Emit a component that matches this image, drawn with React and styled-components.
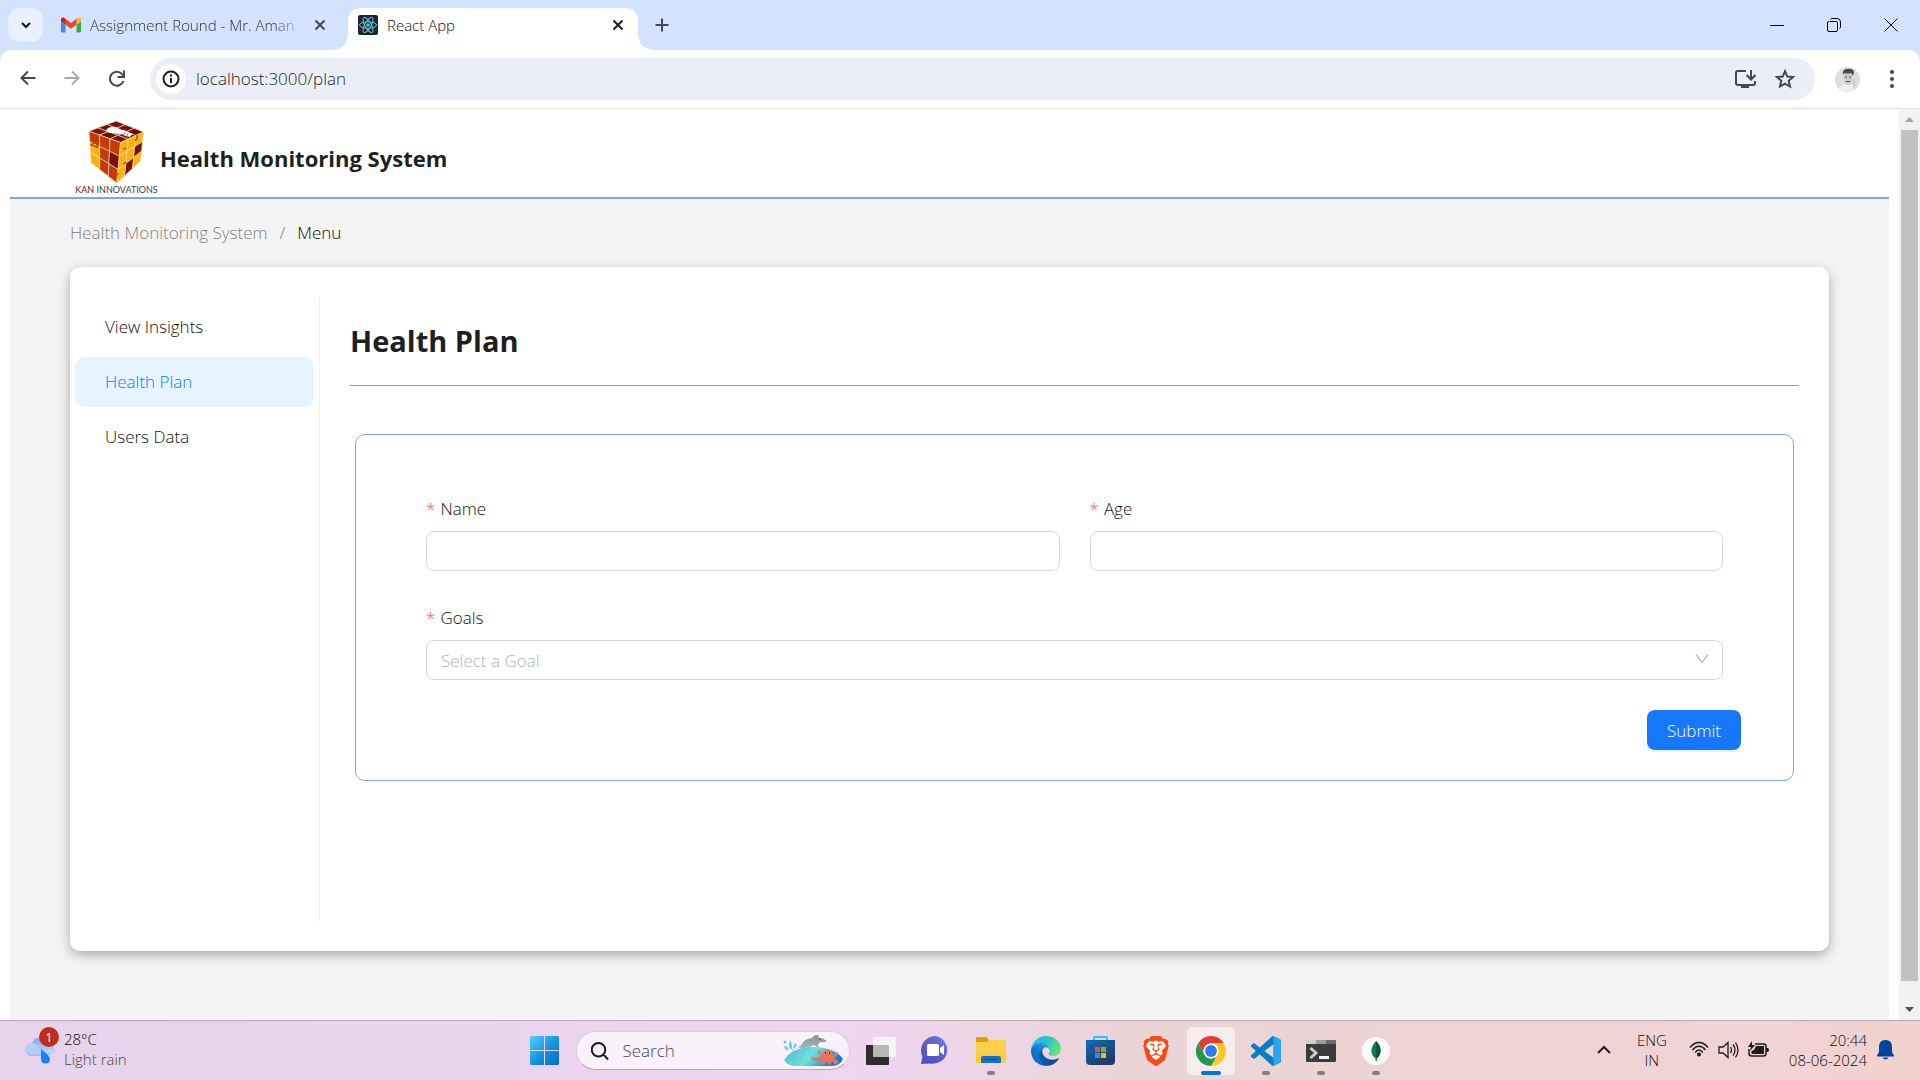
import React from "react";
import styled, { createGlobalStyle, css } from "styled-components";
import { SiBrave } from "react-icons/si";

const GlobalStyle = createGlobalStyle`
  *, *::before, *::after { box-sizing: border-box; }
  body {
    margin: 0;
    font-family: "Open Sans", "Noto Sans", sans-serif;
    font-weight: 350;
    color: #111;
    background: #fff;
  }
  button, input, select { font: inherit; color: inherit; }
  button { padding: 0; border: 0; background: none; cursor: pointer; }
  svg { display: block; flex: none; }
`;

const Screen = styled.div`
  display: flex;
  flex-direction: column;
  height: 100vh;
  overflow: hidden;
`;

/* ---------- browser chrome ---------- */

const TabStrip = styled.header`
  display: flex;
  align-items: center;
  height: 50px;
  flex: none;
  padding-left: 8px;
  background: #d3e2fd;
`;

const TabSearch = styled.button`
  display: grid;
  place-items: center;
  width: 35px;
  height: 34px;
  border-radius: 12px;
  background: #e9f1fe;
`;

const Tab = styled.div`
  position: relative;
  display: flex;
  align-items: center;
  align-self: flex-end;
  gap: 9px;
  height: 42px;
  padding: 0 10px 8px;
  font-size: 15px;
  line-height: 20px;
  width: ${(p) => (p.$active ? 290 : 305)}px;
  color: ${(p) => (p.$active ? "#111" : "#333")};
  ${(p) =>
    p.$active
      ? css`
          background: #fff;
          border-radius: 12px 12px 0 0;
          &::before,
          &::after {
            content: "";
            position: absolute;
            bottom: 0;
            width: 14px;
            height: 14px;
          }
          &::before {
            left: -14px;
            background: radial-gradient(circle at 0 0, transparent 13px, #fff 14px);
          }
          &::after {
            right: -14px;
            background: radial-gradient(circle at 100% 0, transparent 13px, #fff 14px);
          }
        `
      : css`
          padding-left: 18px;
          padding-right: 18px;
        `}
`;

const TabTitle = styled.span`
  flex: 1;
  overflow: hidden;
  white-space: nowrap;
  ${(p) =>
    p.$fade &&
    css`
      mask-image: linear-gradient(to right, #000 88%, transparent);
    `}
`;

const IconButton = styled.button`
  display: grid;
  place-items: center;
  width: ${(p) => p.$size || 20}px;
  height: ${(p) => p.$size || 20}px;
  flex: none;
  color: ${(p) => p.$color || "#474747"};
`;

const NewTab = styled(IconButton)`
  margin-left: 10px;
`;

const WindowButtons = styled.div`
  display: flex;
  margin-left: auto;
  padding-right: 1px;
`;

const WindowButton = styled.button`
  display: grid;
  place-items: center;
  width: 57px;
  height: 48px;
`;

const Toolbar = styled.div`
  display: flex;
  align-items: center;
  flex: none;
  height: 59px;
  padding: 0 12px 0 8px;
  border-bottom: 1px solid #dfe0e2;
  background: #fff;
  position: relative;
  &::before,
  &::after {
    content: "";
    position: absolute;
    top: 0;
    width: 10px;
    height: 10px;
  }
  &::before {
    left: 0;
    background: radial-gradient(circle at 100% 100%, transparent 9px, #d3e2fd 10px);
  }
  &::after {
    right: 0;
    background: radial-gradient(circle at 0 100%, transparent 9px, #d3e2fd 10px);
  }
`;

const NavButtons = styled.div`
  display: flex;
  gap: 4px;
  margin-right: 12px;
`;

const Omnibox = styled.div`
  display: flex;
  align-items: center;
  flex: 1;
  height: 42px;
  padding: 0 10px 0 6px;
  border-radius: 21px;
  background: #ebeef7;
`;

const SiteInfo = styled.button`
  display: grid;
  place-items: center;
  width: 30px;
  height: 30px;
  border-radius: 15px;
  background: #fff;
`;

const Address = styled.input`
  flex: 1;
  min-width: 0;
  margin-left: 10px;
  padding: 0;
  border: 0;
  outline: 0;
  background: none;
  font-size: 17px;
  line-height: 24px;
  color: #1f1f1f;
`;

const Avatar = styled(IconButton)`
  margin: 0 16px 0 19px;
`;

/* ---------- page ---------- */

const Viewport = styled.div`
  display: flex;
  flex: 1;
  min-height: 0;
  overflow: hidden;
`;

const Page = styled.div`
  flex: 1;
  margin: 0 10px;
  display: flex;
  flex-direction: column;
`;

const SiteHeader = styled.header`
  display: flex;
  align-items: center;
  flex: none;
  height: 90px;
  padding: 0 66px;
  gap: 3px;
  border-bottom: 2px solid #75a6fa;
  background: #fff;
`;

const Logo = styled.div`
  display: flex;
  flex-direction: column;
  align-items: center;
  width: 81px;
  padding-top: 9px;
  font-family: Lato, sans-serif;
  font-size: 9px;
  font-weight: 400;
  line-height: 12px;
  white-space: nowrap;
  color: #3d3d3d;
  b {
    font-weight: 400;
    color: #6c1410;
  }
`;

const SiteTitle = styled.h1`
  margin: 0;
  padding-top: 10px;
  font-size: 22px;
  line-height: 32px;
  font-weight: 700;
  color: #1f1f1f;
`;

const Body = styled.main`
  flex: 1;
  padding: 20px 60px 60px;
  background: #f4f4f4;
`;

const Breadcrumb = styled.nav`
  display: flex;
  gap: 12px;
  margin-bottom: 20px;
  font-size: 17px;
  line-height: 28px;
  color: #808080;
  a {
    color: inherit;
    text-decoration: none;
  }
  span:last-child {
    color: #111;
  }
`;

const Card = styled.section`
  display: flex;
  padding: 30px 0;
  border-radius: 10px;
  background: #fff;
  box-shadow: 0 4px 12px rgba(40, 40, 60, 0.36);
`;

const Sider = styled.nav`
  flex: none;
  width: 250px;
  min-height: 624px;
  padding: 5px;
  display: flex;
  flex-direction: column;
  gap: 5px;
  border-right: 1px solid #f0f0f0;
`;

const MenuItem = styled.a`
  padding: 0 30px;
  border-radius: 10px;
  font-size: 17px;
  line-height: 50px;
  text-decoration: none;
  color: ${(p) => (p.$active ? "#1677ff" : "#111")};
  background: ${(p) => (p.$active ? "#e6f4ff" : "transparent")};
`;

const Content = styled.div`
  flex: 1;
  padding: 20px 30px 0;
`;

const Heading = styled.h2`
  margin: 0;
  padding-bottom: 20px;
  border-bottom: 1px solid #9a9a9a;
  font-size: 29px;
  line-height: 48px;
  font-weight: 700;
  color: #1f1f1f;
`;

const PlanForm = styled.form`
  margin: 48px 5px 0;
  padding: 60px 52px 30px;
  border: 1px solid #75a6fa;
  border-radius: 10px;
`;

const Fields = styled.div`
  display: grid;
  grid-template-columns: 1fr 1fr;
  gap: 33px 30px;
  padding: 0 18px;
`;

const Field = styled.div`
  display: flex;
  flex-direction: column;
  gap: 8px;
  ${(p) =>
    p.$wide &&
    css`
      grid-column: 1 / -1;
    `}
`;

const Label = styled.label`
  font-size: 17px;
  line-height: 28px;
  &::before {
    content: "*";
    margin-right: 5px;
    color: #ff4d4f;
  }
`;

const control = css`
  width: 100%;
  height: 40px;
  padding: 0 14px;
  border: 1px solid #d9d9d9;
  border-radius: 8px;
  outline: 0;
  background: #fff;
  font-size: 17px;
`;

const TextBox = styled.input`
  ${control}
`;

const SelectWrap = styled.div`
  position: relative;
  svg {
    position: absolute;
    right: 14px;
    top: 13px;
    pointer-events: none;
  }
`;

const Select = styled.select`
  ${control}
  appearance: none;
  color: #b4b4b4;
`;

const Actions = styled.div`
  display: flex;
  justify-content: flex-end;
  margin-top: 30px;
`;

const Submit = styled.button`
  height: 40px;
  padding: 0 20px;
  border-radius: 8px;
  background: #1677ff;
  box-shadow: 0 2px 0 rgba(5, 145, 255, 0.1);
  font-size: 17px;
  color: #fff;
`;

const ScrollTrack = styled.div`
  display: flex;
  flex-direction: column;
  align-items: center;
  flex: none;
  width: 21px;
  background: #f1f1f1;
`;

const ScrollArrow = styled.span`
  display: grid;
  place-items: center;
  height: 21px;
`;

const ScrollRail = styled.div`
  flex: 1;
  width: 17px;
  padding-bottom: 18px;
  display: flex;
`;

const ScrollThumb = styled.div`
  flex: 1;
  background: #c1c1c1;
`;

/* ---------- taskbar ---------- */

const Taskbar = styled.footer`
  display: grid;
  grid-template-columns: 1fr auto 1fr;
  align-items: center;
  flex: none;
  height: 60px;
  border-top: 1px solid #b5a9b4;
  background: linear-gradient(90deg, #e8d3ec 0%, #ead3ed 25%, #efd5f0 44%, #ebd4d9 58%, #ecd4d5 70%, #f1d4d5 90%, #f0d3ce 100%);
`;

const Weather = styled.button`
  position: relative;
  display: flex;
  align-items: center;
  gap: 9px;
  padding: 0 0 3px 25px;
  text-align: left;
  font-size: 15px;
  line-height: 20px;
  color: #0c0c0c;
  small {
    display: block;
    font-size: 15px;
    color: #4a434b;
  }
`;

const Badge = styled.span`
  position: absolute;
  left: 39px;
  top: -2px;
  width: 20px;
  height: 20px;
  border-radius: 10px;
  background: #c42b1c;
  text-align: center;
  font-size: 13px;
  font-weight: 400;
  line-height: 20px;
  color: #fff;
`;

const Dock = styled.div`
  display: flex;
  align-items: center;
  gap: 7px;
`;

const DockApp = styled.button`
  position: relative;
  display: grid;
  place-items: center;
  width: 48px;
  height: 48px;
  border-radius: 5px;
  background: ${(p) => (p.$state === "active" ? "rgba(255,255,255,.55)" : "transparent")};
  &::after {
    content: "";
    display: ${(p) => (p.$state ? "block" : "none")};
    position: absolute;
    bottom: 0;
    left: 50%;
    transform: translateX(-50%);
    height: 4px;
    border-radius: 2px;
    width: ${(p) => (p.$state === "active" ? 20 : 8)}px;
    background: ${(p) => (p.$state === "active" ? "#0078d4" : "#8a7b80")};
  }
`;

const SearchBox = styled.label`
  display: flex;
  align-items: center;
  gap: 14px;
  width: 274px;
  height: 39px;
  padding: 0 6px 0 14px;
  border: 1px solid #e0cbe0;
  border-bottom-color: #b9a6ba;
  border-radius: 20px;
  background: #f9f2fa;
  input {
    flex: 1;
    min-width: 0;
    padding: 0;
    border: 0;
    outline: 0;
    background: none;
    font-size: 17px;
    line-height: 24px;
  }
  input::placeholder {
    color: #4c464d;
    opacity: 1;
  }
`;

const Tray = styled.div`
  display: flex;
  justify-content: flex-end;
  align-items: center;
  padding: 0 26px 2px 0;
  color: #1c1c1c;
`;

const TrayText = styled.button`
  font-size: 15px;
  line-height: 20px;
  color: #0c0c0c;
  text-align: ${(p) => p.$align};
  margin-right: ${(p) => (p.$align === "right" ? 10 : 22)}px;
`;

const TrayIcons = styled.div`
  display: flex;
  gap: 9px;
  margin-right: 20px;
`;

const TrayChevron = styled.button`
  margin-right: 26px;
`;

/* ---------- drawings ---------- */

const Stroke = ({ size = 20, w = 2, d, color = "currentColor", box = 20, cap = "butt" }) => (
  <svg width={size} height={size} viewBox={`0 0 ${box} ${box}`} fill="none" stroke={color} strokeWidth={w} strokeLinecap={cap}>
    <path d={d} />
  </svg>
);

const Close = () => <Stroke size={20} w={2} d="M5.5 5.5 14.5 14.5M14.5 5.5 5.5 14.5" />;

const Gmail = () => (
  <svg width="20" height="20" viewBox="52 42 88 66">
    <path fill="#4285f4" d="M58 108h14V74L52 59v43c0 3.320 2.690 6 6 6" />
    <path fill="#34a853" d="M120 108h14c3.320 0 6-2.690 6-6V59l-20 15" />
    <path fill="#fbbc04" d="M120 48v26l20-15v-8c0-7.420-8.470-11.650-14.400-7.200" />
    <path fill="#ea4335" d="M72 74V48l24 18 24-18v26L96 92" />
    <path fill="#c5221f" d="M52 51v8l20 15V48l-5.600-4.200c-5.940-4.450-14.400-.22-14.400 7.200" />
  </svg>
);

const ReactMark = () => (
  <svg width="20" height="20" viewBox="0 0 20 20">
    <rect width="20" height="20" rx="2" fill="#20232a" />
    <g fill="none" stroke="#5fc9e3" strokeWidth="1">
      <ellipse cx="10" cy="10" rx="8.500" ry="3.200" />
      <ellipse cx="10" cy="10" rx="8.500" ry="3.200" transform="rotate(60 10 10)" />
      <ellipse cx="10" cy="10" rx="8.500" ry="3.200" transform="rotate(120 10 10)" />
    </g>
    <circle cx="10" cy="10" r="1.700" fill="#5fc9e3" />
  </svg>
);

const mix = (a, b, t) => [a[0] + (b[0] - a[0]) * t, a[1] + (b[1] - a[1]) * t];
const R = "#c33a08";
const Y = "#f9b30b";
const D = "#7a120b";
const faces = [
  { corners: [[84, 65], [163, 35], [243, 67], [176, 98]], colors: [D, "#6b0f08", D, "#6b0f08", D, D, D, D, "#6b0f08"] },
  { corners: [[84, 65], [176, 98], [165, 216], [90, 157]], colors: [R, R, R, Y, R, D, Y, R, R] },
  { corners: [[176, 98], [243, 67], [234, 152], [165, 216]], colors: [Y, Y, Y, Y, Y, D, Y, D, Y] },
];

const Cube = () => (
  <svg width="58" height="64" viewBox="84 32 163 187">
    {faces.map(({ corners: [a, b, c, d], colors }, f) =>
      colors.map((fill, i) => {
        const u = (i % 3) / 3;
        const v = Math.floor(i / 3) / 3;
        const at = (s, t) => mix(mix(a, b, s), mix(d, c, s), t).join(",");
        const e = 1 / 3;
        return (
          <polygon
            key={`${f}-${i}`}
            points={[at(u, v), at(u + e, v), at(u + e, v + e), at(u, v + e)].join(" ")}
            fill={fill}
            stroke="#f0d8b8"
            strokeWidth="2"
          />
        );
      })
    )}
    <path d="M135 66q-3-10 10-13 14-4 24 3 6 6 18 6l10 5 14 5-8 10-15-4-10-6q-10 2-20-1-16-1-23-5z" fill="#fff" />
    <path d="M190 68l-6 10M198 71l-6 10" stroke="#7a120b" strokeWidth="2" />
    <path d="M90 104q8-10 18 0v8l-18-8zM150 190q10 10 20-2M122 128l8 4M122 158l8 6M184 118l8-4M184 160l8-5M218 92l6-6v-10" fill="none" stroke="#b8410a" strokeWidth="4" />
  </svg>
);

const InstallIcon = () => (
  <svg width="22" height="20" viewBox="0 0 22 20" fill="none" stroke="#474747" strokeWidth="2">
    <path d="M12 2H4Q2 2 2 4v10q0 2 2 2h15q2 0 2-2v-2" />
    <path d="M17 1v9M12.500 6 17 10.500 21.500 6" />
    <path d="M7 17.500h8" strokeWidth="3" />
  </svg>
);

const StarIcon = () => (
  <svg width="22" height="22" viewBox="0 0 24 24" fill="none" stroke="#474747" strokeWidth="2.200">
    <path d="M12 3.500 14.500 9.300 20.800 9.900 16 14 17.500 20.200 12 17 6.500 20.200 8 14 3.200 9.900 9.500 9.300Z" />
  </svg>
);

const Portrait = () => (
  <svg width="25" height="25" viewBox="0 0 25 25">
    <circle cx="12.500" cy="12.500" r="12.500" fill="#dedede" />
    <path d="M4 23q2-6 8-6.500 7 .5 9 6-8 4-17 .5z" fill="#efefef" />
    <path d="M9 6h8v7q-1 5-4 5t-4-5z" fill="#c9c9c9" />
    <path d="M8 8q-1-5 3-6 7-1 8 3l-1 4q-1-3-3-3-4 1-6 0z" fill="#4a4a4a" />
    <path d="M10 10h2M14 10h2M11 14.500h4" stroke="#555" strokeWidth="1.200" />
    <path d="M19 12v10" stroke="#b5b5b5" />
  </svg>
);

const RainIcon = () => (
  <svg width="30" height="29" viewBox="0 0 30 29">
    <defs>
      <linearGradient id="cloud" x1="0" y1="0" x2="0" y2="1">
        <stop offset="0" stopColor="#7fa6e8" />
        <stop offset="1" stopColor="#c9dcf8" />
      </linearGradient>
      <linearGradient id="drop" x1="0" y1="0" x2="0" y2="1">
        <stop offset="0" stopColor="#2f7df0" />
        <stop offset="1" stopColor="#0a84ff" />
      </linearGradient>
    </defs>
    <path d="M6 10Q9 1 17 3q7 1 8 7 5 1 5 5 0 5-5 5H10z" fill="url(#cloud)" />
    <path d="M6 20q-6 0-6-6 0-5 6-6 6 0 8 5l4 7z" fill="#b4cff5" />
    <path d="M2 18q8 3 24 0-1 3-5 3H6q-3 0-4-3z" fill="#9dbdf0" />
    <path d="M16 14v10q0 4.500 4.500 4.500T25 24q0-3-9-10z" fill="url(#drop)" />
  </svg>
);

const StartIcon = () => (
  <svg width="29" height="29" viewBox="0 0 29 29">
    <defs>
      <linearGradient id="start" gradientUnits="userSpaceOnUse" x1="0" y1="0" x2="29" y2="29">
        <stop offset="0" stopColor="#4fd0fb" />
        <stop offset="0.500" stopColor="#1798e0" />
        <stop offset="1" stopColor="#0069c8" />
      </linearGradient>
    </defs>
    <path d="M1 0H14V14H0V1zM15 0H28L29 1V14H15zM0 15H14V29H1L0 28zM15 15H29V28L28 29H15z" fill="url(#start)" />
  </svg>
);

const Dolphin = () => (
  <svg width="60" height="31" viewBox="0 0 60 31">
    <defs>
      <linearGradient id="sea" x1="0" y1="0" x2="1" y2="0.300">
        <stop offset="0" stopColor="#4fb8cc" />
        <stop offset="0.550" stopColor="#6fe0dd" />
        <stop offset="1" stopColor="#0f7ce8" />
      </linearGradient>
      <linearGradient id="skin" x1="0" y1="0" x2="0" y2="1">
        <stop offset="0" stopColor="#7f979b" />
        <stop offset="1" stopColor="#a9bcc0" />
      </linearGradient>
    </defs>
    <path d="M1 25Q9 13 26 12q25-1 34 12-3 7-11 7H14Q4 31 1 25z" fill="url(#sea)" />
    <path d="M5 16Q1 14 1 11l4 1zM7 14Q5 9 7 5q3 5 2 9zM10 13l2-5 2 2-3 4z" fill="#6cc9ee" />
    <circle cx="2" cy="7" r="1.500" fill="#6cc9ee" />
    <path d="M9 15q6-1 9-5 3-6 11-7 1-3 6-3l1 3q5 0 6 2l2 1q-2 2-7 1-1 2-2 2l1 4-5-3q-5 3-11 3-5-1-8 1l-2 2q-1-1-3-1z" fill="url(#skin)" />
    <circle cx="37" cy="4" r=".8" fill="#333" />
    <path d="M40 19q0-4 5-4t4 5q4-1 5-4 2 4-3 7l5 4-4 3-3-4-2 5-3-5-4 4-3-1 3-4-6 1-5-1-1-4 4 2 8-2-6-4 2-2z" fill="#ef7350" />
    <path d="M42 18h1M46 18h1" stroke="#4a1d18" strokeWidth="1.500" />
  </svg>
);

const TaskView = () => (
  <svg width="30" height="28" viewBox="0 0 30 28">
    <rect y="8" width="23" height="20" rx="1" fill="#2d2d2d" />
    <rect x="7" width="23" height="20" rx="1" fill="#f5f3f5" />
    <path d="M7 8h16v12H8l-1-1z" fill="#b9b6b8" />
  </svg>
);

const Meet = () => (
  <svg width="29" height="29" viewBox="0 0 29 29">
    <defs>
      <linearGradient id="meet" x1="1" y1="0" x2="0.200" y2="1">
        <stop offset="0" stopColor="#5c8df0" />
        <stop offset="0.400" stopColor="#6a62c4" />
        <stop offset="1" stopColor="#4d50c4" />
      </linearGradient>
    </defs>
    <path d="M14.500 0A14.500 14 0 1 1 9 27.500L0 28 1.500 21A14.500 14.500 0 0 1 14.500 0z" fill="url(#meet)" />
    <rect x="6" y="8" width="12" height="12" rx="1.500" fill="#fff" />
    <path d="M19 12l4-3v10l-4-3z" fill="#fff" />
  </svg>
);

const Folder = () => (
  <svg width="30" height="27" viewBox="0 0 30 27">
    <path d="M0 1q0-1 1-1h9l3 3v5H0z" fill="#e2a003" />
    <path d="M0 5h11l2-2h16q1 0 1 1v22H0z" fill="#ffd04a" />
    <path d="M0 14h30v12H0z" fill="#fbc52e" opacity=".5" />
    <path d="M5 26v-5q0-2 2-2h16q2 0 2 2v5z" fill="#1173c8" />
    <path d="M9 22.500h12" stroke="#0a4c8c" strokeWidth="1.200" />
  </svg>
);

const Edge = () => (
  <svg width="30" height="30" viewBox="0 0 256 256">
    <defs>
      <linearGradient id="e1" x1="0.250" y1="0.700" x2="1" y2="0.700">
        <stop offset="0" stopColor="#0c59a4" />
        <stop offset="1" stopColor="#114a8b" />
      </linearGradient>
      <linearGradient id="e2" x1="0.800" y1="0.200" x2="0.200" y2="0.900">
        <stop offset="0" stopColor="#1b9de2" />
        <stop offset="0.500" stopColor="#0f7cd0" />
        <stop offset="1" stopColor="#0a66c0" />
      </linearGradient>
      <linearGradient id="e3" x1="0" y1="0.300" x2="1" y2="0.600">
        <stop offset="0" stopColor="#2bb8ee" />
        <stop offset="0.500" stopColor="#2ec3c9" />
        <stop offset="1" stopColor="#66eb6e" />
      </linearGradient>
    </defs>
    <g transform="translate(-4.630 -4.920)">
      <path fill="url(#e1)" d="M235.680 195.460a93.730 93.730 0 0 1-10.540 4.710 101.870 101.870 0 0 1-35.900 6.460c-47.320 0-88.540-32.550-88.540-74.320A31.480 31.480 0 0 1 117.130 105c-42.800 1.800-53.800 46.400-53.800 72.530 0 73.880 68.090 81.370 82.760 81.370 7.910 0 19.840-2.300 27-4.560l1.310-.44a128.340 128.340 0 0 0 66.600-52.800 4 4 0 0 0-5.320-5.640z" />
      <path fill="url(#e2)" d="M110.340 246.340A79.200 79.200 0 0 1 87.600 225a80.720 80.720 0 0 1 29.530-120c3.120-1.470 8.450-4.130 15.540-4a32.350 32.350 0 0 1 25.690 13 31.880 31.880 0 0 1 6.360 18.660c0-.21 24.460-79.600-80-79.600-43.900 0-80 41.660-80 78.210a130.150 130.150 0 0 0 12.110 56 128 128 0 0 0 156.380 67.110 75.550 75.550 0 0 1-62.780-8z" />
      <path fill="url(#e3)" d="M156.940 153.780c-.81 1.050-3.300 2.500-3.300 5.660 0 2.610 1.700 5.120 4.720 7.230 14.380 10 41.490 8.680 41.560 8.680a59.560 59.560 0 0 0 30.270-8.350 61.380 61.380 0 0 0 30.430-52.880c.26-22.410-8-37.310-11.340-43.910C228.090 28.760 182.350 4.920 132.610 4.920a128 128 0 0 0-128 126.200c.48-36.540 36.800-66.050 80-66.050 3.500 0 23.460.34 42 10.070 16.340 8.580 24.900 18.940 30.850 29.210 6.180 10.670 7.280 24.150 7.280 29.520s-2.740 13.330-7.800 19.910z" />
    </g>
  </svg>
);

const Store = () => (
  <svg width="29" height="29" viewBox="0 0 29 29">
    <defs>
      <linearGradient id="bag" x1="0" y1="0" x2="0.600" y2="1">
        <stop offset="0" stopColor="#0d6cbd" />
        <stop offset="1" stopColor="#213a66" />
      </linearGradient>
    </defs>
    <path d="M8 5V2q0-1 1-1h11q1 0 1 1v3" fill="none" stroke="#2fc0f5" strokeWidth="2" />
    <path d="M0 4h29v21q0 4-4 4H4q-4 0-4-4z" fill="url(#bag)" />
    <path d="M9 11h5v5H9z" fill="#f25022" />
    <path d="M15 11h5v5h-5z" fill="#7fba00" />
    <path d="M9 17h5v5H9z" fill="#00a4ef" />
    <path d="M15 17h5v5h-5z" fill="#ffb900" />
  </svg>
);

const Brave = () => (
  <svg width="30" height="30" viewBox="0 0 24 24">
    <path d="M5 5h14l1 6-3 8-5 3-5-3-3-8z" fill="#fff" />
    <SiBrave width="24" height="24" color="#fb4a12" size="24" />
  </svg>
);

const Chrome = () => (
  <svg width="30" height="30" viewBox="0 0 48 48">
    <circle cx="24" cy="24" r="24" fill="#fff" />
    <path d="M3.215 12A24 24 0 0 1 44.785 12H24A12 12 0 0 0 13.600 30z" fill="#dc4132" />
    <path d="M44.785 12A24 24 0 0 1 24 48L34.400 30A12 12 0 0 0 24 12z" fill="#fcc624" />
    <path d="M24 48A24 24 0 0 1 3.215 12L13.600 30A12 12 0 0 0 34.400 30z" fill="#259846" />
    <circle cx="24" cy="24" r="12" fill="#fff" />
    <circle cx="24" cy="24" r="9.500" fill="#2f7bee" />
  </svg>
);

const Code = () => (
  <svg width="30" height="30" viewBox="0 0 24 24">
    <path fill="#0a7cc8" d="M23.150 2.587L18.210.21a1.494 1.494 0 0 0-1.705.29l-9.460 8.630-4.120-3.128a.999.999 0 0 0-1.276.057L.327 7.261A1 1 0 0 0 .326 8.740L3.899 12 .326 15.260a1 1 0 0 0 .001 1.479L1.650 17.940a.999.999 0 0 0 1.276.057l4.120-3.128 9.460 8.630a1.492 1.492 0 0 0 1.704.29l4.942-2.377A1.500 1.500 0 0 0 24 20.060V3.939a1.500 1.500 0 0 0-.85-1.352zm-5.146 14.861L10.826 12l7.178-5.448v10.896z" />
    <path fill="#2aa5f0" d="M18.210.21l4.940 2.377a1.500 1.500 0 0 1 .85 1.352V20.060a1.500 1.500 0 0 1-.85 1.350l-4.940 2.380q-.9.200-1.200-.2 1 0 1-1.200V1.600q0-1.200-1-1.200.6-.4 1.200-.2z" />
  </svg>
);

const Terminal = () => (
  <svg width="30" height="22" viewBox="0 0 30 22">
    <rect width="30" height="22" rx="1.500" fill="#3b3b3b" />
    <path d="M0 4V1q0-1 1-1h9v4z" fill="#cfcfcf" />
    <path d="M10 0h10v4H10z" fill="#9b9b9b" />
    <path d="M20 0h9q1 0 1 1v3H20z" fill="#6a6a6a" />
    <path d="M4.500 8 10 13 4.500 18" fill="none" stroke="#ccc" strokeWidth="3" />
    <path d="M13 17.500h10" stroke="#f5f5f5" strokeWidth="3" />
  </svg>
);

const Mongo = () => (
  <svg width="28" height="28" viewBox="0 0 28 28">
    <circle cx="14" cy="14" r="14" fill="#f9fafa" />
    <path d="M14 4q5 5 4.500 10.500Q18 19 14.500 21.500V24h-1v-2.500Q9.500 19 9.500 14 9.500 9 14 4z" fill="#0f7a51" />
    <path d="M14 4q5 5 4.500 10.500Q18 19 14.500 21.500V24H14z" fill="#07593c" />
  </svg>
);

const Wifi = () => (
  <svg width="20" height="16" viewBox="0 0 20 16" fill="none" stroke="#1c1c1c" strokeWidth="1.400">
    <path d="M1 6.500Q5 1.500 10 1.500T19 6.500M3.500 9Q6.500 5.300 10 5.300T16.500 9M6.200 11.500Q8 9 10 9t3.800 2.500" />
    <circle cx="10" cy="13.500" r="1.300" fill="#1c1c1c" />
  </svg>
);

const Volume = () => (
  <svg width="21" height="18" viewBox="0 0 21 18" fill="none" stroke="#1c1c1c" strokeWidth="1.300">
    <path d="M1 6h4l5-4.500v15L5 12H1zM12.500 6q2 3 0 6M15 3.500q4 5.500 0 11M17.500 1.500q5 7.500 0 15" />
  </svg>
);

const Battery = () => (
  <svg width="21" height="16" viewBox="0 0 21 16">
    <path d="M7 3h8.500q2.500 0 2.500 2.500v7q0 2.500-2.500 2.500h-12Q1 15 1 12.500V8" fill="none" stroke="#1c1c1c" strokeWidth="1.500" />
    <path d="M8 5h8v8H3.500V10L6 9z" fill="#1c1c1c" />
    <path d="M18 7h1.500q1.500 0 1.500 2t-1.500 2H18z" fill="#1c1c1c" />
    <path d="M4 0 0 6h3L2 10 7 4H4z" fill="#1c1c1c" />
  </svg>
);

const Bell = () => (
  <svg width="17" height="20" viewBox="0 0 17 20" fill="#00439c">
    <path d="M8.500 0Q15 0 15 7v5l2 3.500v1H0v-1L2 12V7q0-7 6.500-7zM5.500 17.500h6q-1 2-3 2t-3-2z" />
  </svg>
);

/* ---------- app ---------- */

const MENU = ["View Insights", "Health Plan", "Users Data"];

const APPS = [
  { name: "Task view", Icon: TaskView },
  { name: "Meet", Icon: Meet },
  { name: "File Explorer", Icon: Folder, state: "open" },
  { name: "Edge", Icon: Edge },
  { name: "Store", Icon: Store },
  { name: "Brave", Icon: Brave },
  { name: "Chrome", Icon: Chrome, state: "active" },
  { name: "Code", Icon: Code, state: "open" },
  { name: "Terminal", Icon: Terminal, state: "open" },
  { name: "Compass", Icon: Mongo, state: "open" },
];

function BrowserChrome() {
  return (
    <>
      <TabStrip>
        <TabSearch aria-label="Search tabs">
          <Stroke size={12} box={12} w={2} d="M2 4 6 8 10 4" />
        </TabSearch>
        <Tab>
          <Gmail />
          <TabTitle $fade>Assignment Round - Mr. Aman</TabTitle>
          <IconButton aria-label="Close tab"><Close /></IconButton>
        </Tab>
        <Tab $active>
          <ReactMark />
          <TabTitle>React App</TabTitle>
          <IconButton aria-label="Close tab" $color="#1f1f1f"><Close /></IconButton>
        </Tab>
        <NewTab aria-label="New tab" $size={28}>
          <Stroke size={20} d="M10 3.500V16.500M3.500 10H16.500" />
        </NewTab>
        <WindowButtons>
          <WindowButton aria-label="Minimize">
            <Stroke size={14} box={14} w={1} color="#000" d="M0 7.500H14" />
          </WindowButton>
          <WindowButton aria-label="Restore">
            <Stroke size={14} box={14} w={1} color="#000" d="M2.500 3.500H9q1.500 0 1.500 1.500v7q0 1.500-1.500 1.500H2Q.5 13.500.5 12V5Q.5 3.500 2 3.500M3.500 1.500Q4 .5 5 .5h5q3.500 0 3.500 3.500v5q0 1-1 1.500" />
          </WindowButton>
          <WindowButton aria-label="Close window">
            <Stroke size={14} box={14} w={1} color="#000" d="M.5.5 13.500 13.500M13.500.5.5 13.500" />
          </WindowButton>
        </WindowButtons>
      </TabStrip>
      <Toolbar>
        <NavButtons>
          <IconButton $size={40} aria-label="Back">
            <Stroke size={20} d="M17.500 10H4M10 3.500 3.500 10 10 16.500" />
          </IconButton>
          <IconButton $size={40} aria-label="Forward" $color="#a8a9ab">
            <Stroke size={20} d="M2.500 10H16M10 3.500 16.500 10 10 16.500" />
          </IconButton>
          <IconButton $size={42} aria-label="Reload">
            <Stroke size={20} d="M16.500 12A7 7 0 1 1 15.500 5.500L17 7M17 1.500V8H10.500" />
          </IconButton>
        </NavButtons>
        <Omnibox>
          <SiteInfo aria-label="Site information">
            <svg width="18" height="18" viewBox="0 0 18 18" fill="none" stroke="#1f1f1f" strokeWidth="2">
              <circle cx="9" cy="9" r="7.500" />
              <path d="M9 8v5M9 4.500v2" />
            </svg>
          </SiteInfo>
          <Address aria-label="Address" defaultValue="localhost:3000/plan" />
          <IconButton $size={40} aria-label="Install"><InstallIcon /></IconButton>
          <IconButton $size={40} aria-label="Bookmark"><StarIcon /></IconButton>
        </Omnibox>
        <Avatar $size={26} aria-label="Profile"><Portrait /></Avatar>
        <IconButton $size={32} aria-label="Browser menu">
          <svg width="4" height="18" viewBox="0 0 4 18" fill="#474747">
            <circle cx="2" cy="2" r="2" />
            <circle cx="2" cy="9" r="2" />
            <circle cx="2" cy="16" r="2" />
          </svg>
        </IconButton>
      </Toolbar>
    </>
  );
}

function HealthPage() {
  return (
    <Page>
      <SiteHeader>
        <Logo>
          <Cube />
          <span><b>KAN</b> INNOVATIONS</span>
        </Logo>
        <SiteTitle>Health Monitoring System</SiteTitle>
      </SiteHeader>
      <Body>
        <Breadcrumb aria-label="Breadcrumb">
          <a href="#home">Health Monitoring System</a>
          <span>/</span>
          <span>Menu</span>
        </Breadcrumb>
        <Card>
          <Sider>
            {MENU.map((item) => (
              <MenuItem key={item} href="#menu" $active={item === "Health Plan"}>{item}</MenuItem>
            ))}
          </Sider>
          <Content>
            <Heading>Health Plan</Heading>
            <PlanForm onSubmit={(e) => e.preventDefault()}>
              <Fields>
                <Field>
                  <Label htmlFor="name">Name</Label>
                  <TextBox id="name" />
                </Field>
                <Field>
                  <Label htmlFor="age">Age</Label>
                  <TextBox id="age" />
                </Field>
                <Field $wide>
                  <Label htmlFor="goals">Goals</Label>
                  <SelectWrap>
                    <Select id="goals" defaultValue="">
                      <option value="">Select a Goal</option>
                    </Select>
                    <svg width="14" height="12" viewBox="0 0 14 12" fill="none" stroke="#bfbfbf" strokeWidth="1.500">
                      <path d="M1 1.500 7 9.500 13 1.500" />
                    </svg>
                  </SelectWrap>
                </Field>
              </Fields>
              <Actions>
                <Submit type="submit">Submit</Submit>
              </Actions>
            </PlanForm>
          </Content>
        </Card>
      </Body>
    </Page>
  );
}

function WindowsTaskbar() {
  return (
    <Taskbar>
      <Weather>
        <RainIcon />
        <Badge>1</Badge>
        <span>28°C<small>Light rain</small></span>
      </Weather>
      <Dock>
        <DockApp aria-label="Start"><StartIcon /></DockApp>
        <SearchBox>
          <Stroke size={18} box={18} w={2} color="#1c1c1c" d="M12.500 12.500 17 17.500M7.500 1A6.500 6.500 0 1 1 7.500 14.500 6.500 6.500 0 1 1 7.500 1" />
          <input type="text" aria-label="Search" placeholder="Search" />
          <Dolphin />
        </SearchBox>
        {APPS.map(({ name, Icon, state }) => (
          <DockApp key={name} aria-label={name} $state={state}><Icon /></DockApp>
        ))}
      </Dock>
      <Tray>
        <TrayChevron aria-label="Hidden icons">
          <Stroke size={14} box={14} w={2} d="M1 10 7 4 13 10" />
        </TrayChevron>
        <TrayText $align="center">ENG<br />IN</TrayText>
        <TrayIcons>
          <Wifi />
          <Volume />
          <Battery />
        </TrayIcons>
        <TrayText $align="right">20:44<br />08-06-2024</TrayText>
        <Bell />
      </Tray>
    </Taskbar>
  );
}

export default function App() {
  return (
    <Screen>
      <GlobalStyle />
      <BrowserChrome />
      <Viewport>
        <HealthPage />
        <ScrollTrack>
          <ScrollArrow>
            <svg width="9" height="5" viewBox="0 0 9 5" fill="#a3a3a3"><path d="M4.500 0 9 5H0z" /></svg>
          </ScrollArrow>
          <ScrollRail><ScrollThumb /></ScrollRail>
          <ScrollArrow>
            <svg width="9" height="5" viewBox="0 0 9 5" fill="#505050"><path d="M0 0H9L4.500 5z" /></svg>
          </ScrollArrow>
        </ScrollTrack>
      </Viewport>
      <WindowsTaskbar />
    </Screen>
  );
}
